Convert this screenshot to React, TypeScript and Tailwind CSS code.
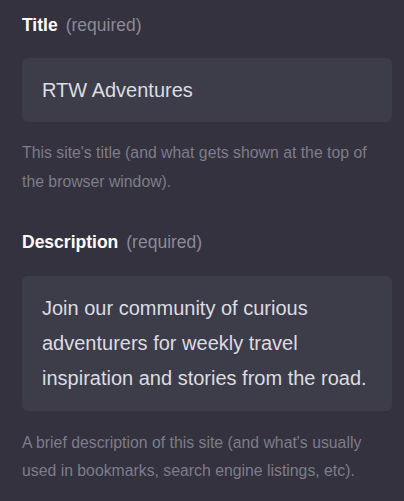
export default function App() {
  return (
    <div
      className="min-h-[501px] w-full bg-[#33323e] pl-[22px] pr-[12px] pt-[13px]"
      style={{ fontFamily: '"Liberation Sans", Arial, sans-serif' }}
    >
      <div className="flex items-baseline gap-[8px] text-[17.5px] leading-[24px]">
        <span className="font-bold text-white">Title</span>
        <span className="text-[#8b8a96]">(required)</span>
      </div>
      <div className="mt-[21px] flex h-[64px] items-center rounded-[6px] bg-[#3d3d4a] px-5 text-[20px] text-[#dcdce2]">
        RTW Adventures
      </div>
      <p className="mt-[16px] text-[15.8px] leading-[29px] text-[#7e7d8a]">
        This site's title (and what gets shown at the top of the browser window).
      </p>
      <div className="mt-[34px] flex items-baseline gap-[8px] text-[17.5px] leading-[24px]">
        <span className="font-bold text-white">Description</span>
        <span className="text-[#8b8a96]">(required)</span>
      </div>
      <div className="mt-[22px] rounded-[6px] bg-[#3d3d4a] px-5 py-[15px] text-[20px] leading-[35px] text-[#dcdce2]">
        Join our community of curious adventurers for weekly travel inspiration and stories from the road.
      </div>
      <p className="mt-[18px] text-[15.8px] leading-[28px] text-[#7e7d8a]">
        A brief description of this site (and what's usually used in bookmarks, search engine listings, etc).
      </p>
    </div>
  );
}
